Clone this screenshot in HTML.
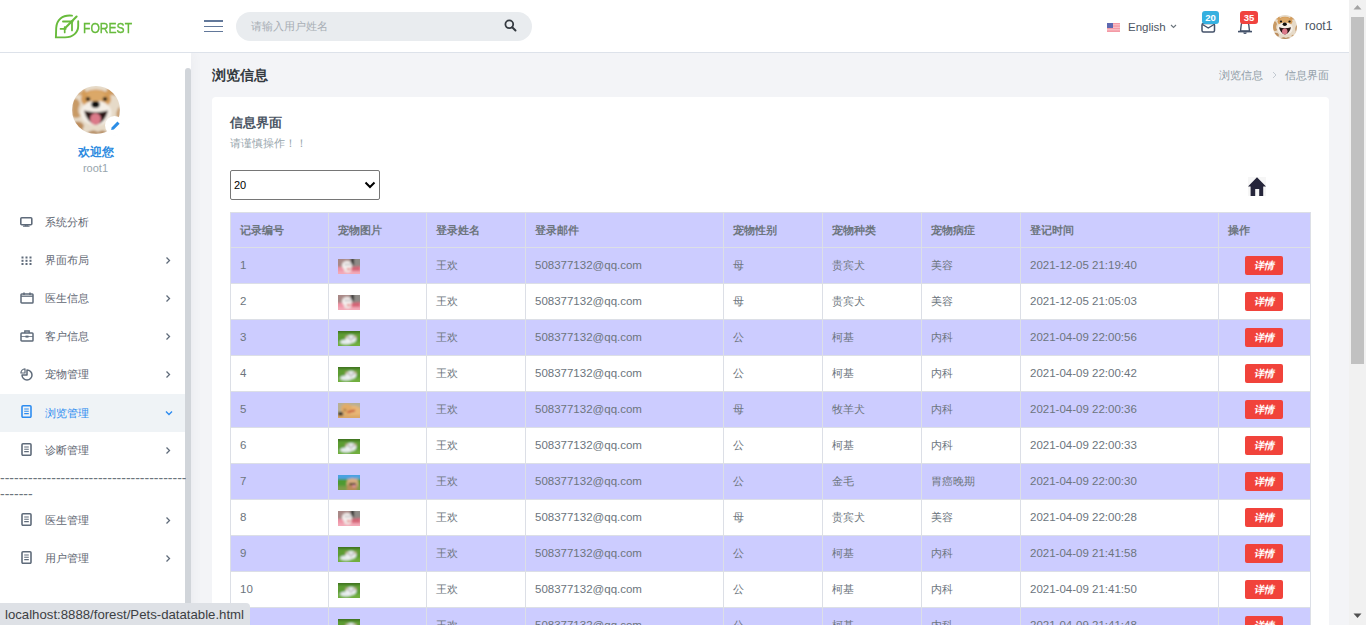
<!DOCTYPE html>
<html><head><meta charset="utf-8">
<style>
*{box-sizing:border-box;margin:0;padding:0}
html,body{width:1366px;height:625px;overflow:hidden}
body{position:relative;background:#f3f4f7;font-family:"Liberation Sans",sans-serif;color:#6c757d}
.abs{position:absolute}
#header{position:absolute;z-index:5;left:0;top:0;width:1349px;height:53px;background:#fff;border-bottom:1px solid #dde2ea}
#sidebar{position:absolute;left:0;top:53px;width:191px;height:572px;background:#fff;box-shadow:0 0 12px rgba(60,70,90,0.06)}
#sbthumb{position:absolute;left:185px;top:68px;width:6px;height:600px;background:#d1d5da;border-radius:3px 3px 0 0}
#vscroll{position:absolute;left:1349px;top:0;width:17px;height:625px;background:#f1f1f1}
#vthumb{position:absolute;left:1351px;top:17px;width:13px;height:347px;background:#c1c1c1}
.card{position:absolute;left:212px;top:97px;width:1117px;height:540px;background:#fff;border-radius:4px}
.trow{position:absolute;left:230px;width:1081px}
.odd{background:#ccccff}.even{background:#fff}
.hl{position:absolute;left:230px;width:1081px;height:1px;background:#dcdfe6}
.vl{position:absolute;top:212px;width:1px;height:420px;background:#dcdfe6}
.th{position:absolute;height:34px;line-height:35px;font-size:11px;font-weight:bold;color:#6c757d;white-space:nowrap}
.td{position:absolute;height:35px;line-height:35px;font-size:11.5px;color:#6c757d;white-space:nowrap}
.cj{font-size:10.5px}
.petwrap{position:absolute;width:22px;height:15px}
.pet{display:block}
.btn{position:absolute;width:38px;height:19px;line-height:19px;background:#f1433b;color:#fff;border-radius:2px;text-align:center;font-size:10px;font-weight:bold;font-style:italic}
.menu{position:absolute;left:0;width:185px;height:38px}
.menu .t{position:absolute;left:45px;top:0;line-height:38px;font-size:11px;color:#5f6773}
.menu svg.ic{position:absolute;left:20px;top:12px}
.menu .chev{position:absolute;left:165px;top:15px}
.menu.active{background:#eff3f6}
.menu.active .t{color:#2d8cf0}
</style></head><body>
<div id="header">
  <svg class="abs" style="left:50px;top:10px" width="35" height="32" viewBox="0 0 35 32">
    <g fill="none" stroke="#68bb3c" stroke-linecap="round">
    <path d="M22 5.6 C 12 4.6, 6.6 10, 6.2 18 L 5.9 27.4 L 15 27.4 C 23 27.4, 28.2 22.5, 28.2 16 L 28.2 11.2" stroke-width="1.9"/>
    <path d="M26.6 6.6 L 14.5 18.7" stroke-width="2.1"/>
    <path d="M13 11.5 L 22.5 11.5" stroke-width="1.9"/>
    <path d="M22 11.5 L 22 20.4" stroke-width="1.8"/>
    <path d="M10.4 18.9 L 15.8 18.9" stroke-width="1.6"/>
    <path d="M14.7 17 L 14.7 22.4" stroke-width="1.7"/>
    </g>
  </svg>
  <div class="abs" style="left:83px;top:17.5px;font-size:15.3px;color:#67bb3d;-webkit-text-stroke:0.4px #67bb3d;line-height:20px;transform:scaleX(0.79);transform-origin:0 0">FOREST</div>
  <div class="abs" style="left:204px;top:20px;width:19px;height:2px;background:#62789a"></div>
  <div class="abs" style="left:204px;top:26px;width:19px;height:1.4px;background:#62789a"></div>
  <div class="abs" style="left:204px;top:31px;width:19px;height:1.4px;background:#62789a"></div>
  <div class="abs" style="left:236px;top:12px;width:296px;height:29px;background:#e9ecef;border-radius:15px"></div>
  <div class="abs" style="left:251px;top:12px;line-height:29px;font-size:10.7px;color:#a8aeb5">请输入用户姓名</div>
  <svg class="abs" style="left:504px;top:19px" width="13" height="13" viewBox="0 0 13 13"><circle cx="5.3" cy="5.3" r="3.9" fill="none" stroke="#343a40" stroke-width="1.8"/><path d="M8.2 8.2 L11.5 11.5" stroke="#343a40" stroke-width="2" stroke-linecap="round"/></svg>
  <!-- flag -->
  <svg class="abs" style="left:1107px;top:23px" width="13" height="9" viewBox="0 0 13 9">
    <rect width="13" height="9" fill="#f49aa5"/>
    <rect y="1.3" width="13" height="1" fill="#fbc9cf"/><rect y="3.8" width="13" height="1" fill="#fbc9cf"/><rect y="6.3" width="13" height="1" fill="#fbc9cf"/>
    <rect width="6" height="5" fill="#5d68b0"/>
  </svg>
  <div class="abs" style="left:1128px;top:18px;font-size:11.5px;line-height:18px;color:#4c5563">English</div>
  <svg class="abs" style="left:1170px;top:24px" width="7" height="5" viewBox="0 0 7 5"><path d="M1 1 L3.5 3.5 L6 1" fill="none" stroke="#6c757d" stroke-width="1.1"/></svg>
  <!-- mail -->
  <svg class="abs" style="left:1201px;top:22px" width="15" height="11" viewBox="0 0 15 11"><rect x="1" y="1.5" width="12.5" height="8.5" rx="1.5" fill="none" stroke="#44526a" stroke-width="1.5"/><path d="M1.5 2.5 L7.25 6 L13 2.5" fill="none" stroke="#44526a" stroke-width="1.4"/></svg>
  <div class="abs" style="left:1202px;top:11px;width:17px;height:13px;background:#35b0e0;border-radius:3px;color:#fff;font-size:9.5px;font-weight:bold;text-align:center;line-height:13px">20</div>
  <!-- bell -->
  <svg class="abs" style="left:1237px;top:20px" width="16" height="15" viewBox="0 0 16 15"><path d="M3.5 11 L4.2 5 C4.5 2.5 6 1.5 8 1.5 C10 1.5 11.5 2.5 11.8 5 L12.5 11 Z" fill="#fff" stroke="#44526a" stroke-width="1.4"/><path d="M1 11.6 L15 11.6" stroke="#44526a" stroke-width="1.6"/><path d="M6.7 12.5 A1.4 1.4 0 0 0 9.3 12.5" fill="none" stroke="#44526a" stroke-width="1.3"/></svg>
  <div class="abs" style="left:1240px;top:11px;width:18px;height:13px;background:#f0433f;border-radius:3px;color:#fff;font-size:9.5px;font-weight:bold;text-align:center;line-height:13px">35</div>
  <!-- avatar -->
  <svg class="abs" style="left:1273px;top:15px" width="24" height="24" viewBox="0 0 48 48" id="dogsmall"><use href="#dog"/></svg>
  <div class="abs" style="left:1305px;top:17px;font-size:12px;line-height:18px;color:#4c5563">root1</div>
</div>
<svg width="0" height="0" style="position:absolute">
  <defs>
    
    <filter id="bl" filterUnits="userSpaceOnUse" x="-3" y="-3" width="28" height="21"><feGaussianBlur stdDeviation="1"/></filter>
    <clipPath id="pc"><rect width="22" height="15"/></clipPath>
    <g id="pet-pink"><g clip-path="url(#pc)"><g filter="url(#bl)">
      <rect x="-2" y="-2" width="26" height="19" fill="#ef93a5"/>
      <rect x="-2" y="-2" width="26" height="10" fill="#a88886"/>
      <rect x="12" y="-2" width="12" height="10" fill="#8e8a86"/>
      <rect x="13" y="-1" width="3" height="7" fill="#2a2626"/>
      <path d="M13 8 L22 7 L22 13 L14 12 Z" fill="#d66577"/>
      <rect x="-2" y="12" width="26" height="5" fill="#f3a9b7"/>
      <ellipse cx="9" cy="6.5" rx="5" ry="4.5" fill="#f6f2f0"/>
      <ellipse cx="9.5" cy="11" rx="3.5" ry="2.5" fill="#f1e8e6"/>
      <circle cx="8" cy="5.5" r="0.8" fill="#556"/><circle cx="11" cy="5.5" r="0.8" fill="#556"/>
      <rect x="9" y="9.5" width="3" height="1.2" fill="#d33"/>
    </g></g></g>
    <g id="pet-green"><g clip-path="url(#pc)"><g filter="url(#bl)">
      <rect x="-2" y="-2" width="26" height="19" fill="#5c9c32"/>
      <rect x="-2" y="-2" width="26" height="4" fill="#3f7324"/>
      <rect x="-2" y="11" width="26" height="6" fill="#6fae3e"/>
      <ellipse cx="8" cy="11" rx="6" ry="2.5" fill="#e6ecef"/>
      <ellipse cx="13" cy="8" rx="5.5" ry="4" fill="#eef2f4"/>
      <circle cx="8.5" cy="5.8" r="1.2" fill="#c9a48a"/><circle cx="17.5" cy="5.8" r="1.2" fill="#c9a48a"/>
      <circle cx="11" cy="7" r="0.8" fill="#445"/><circle cx="15" cy="7" r="0.8" fill="#445"/>
      <circle cx="13" cy="9" r="0.8" fill="#765"/>
    </g></g></g>
    <g id="pet-tan"><g clip-path="url(#pc)"><g filter="url(#bl)">
      <rect x="-2" y="-2" width="26" height="19" fill="#b8b094"/>
      <ellipse cx="15" cy="9" rx="9" ry="6.5" fill="#e8b676"/>
      <ellipse cx="8.5" cy="6" rx="5.5" ry="5.5" fill="#e2ac68"/>
      <rect x="-2" y="12" width="26" height="5" fill="#dba766"/>
      <rect x="0" y="9" width="5" height="3.5" fill="#2a2c28"/>
      <circle cx="6.8" cy="7" r="1" fill="#6a4a2a"/>
      <path d="M9 8.5 L17 6.5 L17 8.2 L10 10 Z" fill="#c0392b"/>
    </g></g></g>
    <g id="pet-sky"><g clip-path="url(#pc)"><g filter="url(#bl)">
      <rect x="-2" y="-2" width="26" height="19" fill="#4e9a30"/>
      <rect x="-2" y="-2" width="26" height="6" fill="#4aa2e2"/>
      <rect x="-2" y="11" width="26" height="6" fill="#7b9c4a"/>
      <ellipse cx="14.5" cy="9" rx="6" ry="6" fill="#d8ae80"/>
      <rect x="9" y="10" width="10" height="6" fill="#b98a5a"/>
      <path d="M10 3 L12 6 L9 6 Z M19 2 L17 6 L20 6 Z" fill="#d8ae80"/>
      <rect x="11" y="8" width="7" height="2" fill="#222"/>
      <ellipse cx="16" cy="11" rx="1.5" ry="1.2" fill="#f19ab0"/>
    </g></g></g>
<clipPath id="cc"><circle cx="24" cy="24" r="24"/></clipPath>
    <filter id="dbl" filterUnits="userSpaceOnUse" x="-4" y="-4" width="56" height="56"><feGaussianBlur stdDeviation="0.9"/></filter>
    <g id="dog">
      <g clip-path="url(#cc)"><g filter="url(#dbl)">
        <rect x="-4" y="-4" width="56" height="56" fill="#e6dac8"/>
        <path d="M0 14 Q6 10 8 18 Q4 26 9 30 Q3 34 0 30 Z" fill="#c0894c" opacity="0.8"/>
        <path d="M2 36 Q10 34 12 40 Q8 46 14 48 L0 48 Z" fill="#b07840" opacity="0.8"/>
        <path d="M34 0 Q44 2 48 8 Q42 12 38 6 Z" fill="#b98248" opacity="0.8"/>
        <path d="M48 20 Q42 26 46 34 Q40 40 48 42 Z" fill="#b88046" opacity="0.7"/>
        <path d="M14 48 Q20 42 26 46 Q32 42 36 48 Z" fill="#a5703a" opacity="0.8"/>
        <ellipse cx="40" cy="42" rx="3" ry="2.5" fill="#c2925c" opacity="0.8"/>
        <ellipse cx="4" cy="6" rx="4" ry="3" fill="#c89560" opacity="0.7"/>
        <path d="M7 9 L12 2 L16 10 Z" fill="#d29c5c"/>
        <path d="M41 9 L36 2 L32 10 Z" fill="#d29c5c"/>
        <ellipse cx="24" cy="13" rx="15" ry="9.5" fill="#d59c58"/>
        <ellipse cx="24" cy="27" rx="15.5" ry="12.5" fill="#f4eee6"/>
        <ellipse cx="24" cy="10" rx="9" ry="5.5" fill="#dba868"/>
        <ellipse cx="16" cy="13" rx="2.3" ry="1.9" fill="#141414"/>
        <ellipse cx="33" cy="13" rx="2.3" ry="1.9" fill="#141414"/>
        <ellipse cx="23.5" cy="18.5" rx="4.2" ry="3.4" fill="#0e0e0e"/>
        <path d="M12 24.5 Q24 28 36 24.5 Q33 37 24 39 Q15 37 12 24.5 Z" fill="#2a1616"/>
        <ellipse cx="23.5" cy="33" rx="5.5" ry="6" fill="#dc7a8a"/>
      </g></g>
    </g>
  </defs>
</svg>
<div id="sidebar"></div>
<div id="sbthumb"></div>
<!-- profile -->
<svg class="abs" style="left:72px;top:86px" width="48" height="48" viewBox="0 0 48 48"><use href="#dog"/></svg>
<div class="abs" style="left:105px;top:116px;width:19px;height:19px;border-radius:50%;background:#fff;box-shadow:0 6px 28px rgba(0,0,0,0.018)"></div>
<svg class="abs" style="left:109px;top:120px" width="12" height="12" viewBox="0 0 12 12"><path d="M2.2 10 L2.6 7.4 L8.4 1.6 L10.6 3.8 L4.8 9.6 Z" fill="#2b8de6"/></svg>
<div class="abs" style="left:0;top:143px;width:191px;text-align:center;font-size:11.5px;font-weight:bold;color:#2b8ae0;line-height:18px">欢迎您</div>
<div class="abs" style="left:0;top:160px;width:191px;text-align:center;font-size:11px;color:#98a6ad;line-height:16px">root1</div>
<!-- menu -->
<div class="menu" style="top:203px">
  <svg class="ic" width="14" height="12" viewBox="0 0 14 12" style="top:14px"><rect x="0.8" y="0.8" width="11" height="6.9" rx="1" fill="none" stroke="#5f6b7a" stroke-width="1.6"/><path d="M5.5 7.5 V9.2 M7.1 7.5 V9.2" stroke="#5f6b7a" stroke-width="1.2"/><path d="M3.6 9.2 H9" stroke="#5f6b7a" stroke-width="1.3" stroke-linecap="round"/></svg>
  <div class="t">系统分析</div>
</div>
<div class="menu" style="top:241px">
  <svg class="ic" width="12" height="10" viewBox="0 0 12 10" style="left:21px;top:15px"><g fill="#5f6b7a"><rect x="0.5" y="0.5" width="2" height="2"/><rect x="4.5" y="0.5" width="2" height="2"/><rect x="8.5" y="0.5" width="2" height="2"/><rect x="0.5" y="3.8" width="2" height="2"/><rect x="4.5" y="3.8" width="2" height="2"/><rect x="8.5" y="3.8" width="2" height="2"/><rect x="0.5" y="7" width="2" height="2"/><rect x="4.5" y="7" width="2" height="2"/><rect x="8.5" y="7" width="2" height="2"/></g></svg>
  <div class="t">界面布局</div>
  <svg class="chev" width="6" height="9" viewBox="0 0 6 9"><path d="M1.5 1.5 L4.5 4.5 L1.5 7.5" fill="none" stroke="#5f6b7a" stroke-width="1.3"/></svg>
</div>
<div class="menu" style="top:279px">
  <svg class="ic" width="14" height="12" viewBox="0 0 14 12" style="top:13px"><rect x="1" y="2" width="12" height="9" rx="0.8" fill="none" stroke="#5f6b7a" stroke-width="1.5"/><path d="M1 4.2 H13" stroke="#5f6b7a" stroke-width="1.3"/><path d="M4 0.5 V3 M10 0.5 V3" stroke="#5f6b7a" stroke-width="1.5"/></svg>
  <div class="t">医生信息</div>
  <svg class="chev" width="6" height="9" viewBox="0 0 6 9"><path d="M1.5 1.5 L4.5 4.5 L1.5 7.5" fill="none" stroke="#5f6b7a" stroke-width="1.3"/></svg>
</div>
<div class="menu" style="top:317px">
  <svg class="ic" width="14" height="12" viewBox="0 0 14 12" style="top:13px"><rect x="1" y="3" width="12" height="8" rx="0.8" fill="none" stroke="#5f6b7a" stroke-width="1.5"/><path d="M4.8 3 V1 H9.2 V3" fill="none" stroke="#5f6b7a" stroke-width="1.3"/><path d="M1 6.5 H13" stroke="#5f6b7a" stroke-width="0.8"/><rect x="5.5" y="5.6" width="3" height="2" fill="#5f6b7a"/></svg>
  <div class="t">客户信息</div>
  <svg class="chev" width="6" height="9" viewBox="0 0 6 9"><path d="M1.5 1.5 L4.5 4.5 L1.5 7.5" fill="none" stroke="#5f6b7a" stroke-width="1.3"/></svg>
</div>
<div class="menu" style="top:355px">
  <svg class="ic" width="14" height="13" viewBox="0 0 14 13" style="top:13px"><path d="M7 2 A5 5 0 1 1 2 7 H7 Z" fill="none" stroke="#5f6b7a" stroke-width="1.5" stroke-linejoin="round"/><path d="M5 0.9 V5 H0.9 A4.2 4.2 0 0 1 5 0.9 Z" fill="none" stroke="#5f6b7a" stroke-width="1.2" stroke-linejoin="round"/></svg>
  <div class="t">宠物管理</div>
  <svg class="chev" width="6" height="9" viewBox="0 0 6 9"><path d="M1.5 1.5 L4.5 4.5 L1.5 7.5" fill="none" stroke="#5f6b7a" stroke-width="1.3"/></svg>
</div>
<div class="menu active" style="top:394px">
  <svg class="ic" width="11" height="13" viewBox="0 0 11 13" style="left:21px;top:11px"><rect x="1" y="0.8" width="9" height="11.5" rx="1" fill="none" stroke="#2d8cf0" stroke-width="1.6"/><path d="M3.2 4 H7.8 M3.2 6.3 H7.8 M3.2 8.6 H7.8" stroke="#2d8cf0" stroke-width="1.1"/></svg>
  <div class="t">浏览管理</div>
  <svg class="chev" width="8" height="6" viewBox="0 0 8 6" style="left:165px;top:16px"><path d="M1 1.5 L4 4.5 L7 1.5" fill="none" stroke="#2d8cf0" stroke-width="1.4"/></svg>
</div>
<div class="menu" style="top:431px">
  <svg class="ic" width="11" height="13" viewBox="0 0 11 13" style="left:21px;top:12px"><rect x="1" y="0.8" width="9" height="11.5" rx="1" fill="none" stroke="#5f6b7a" stroke-width="1.6"/><path d="M3.2 4 H7.8 M3.2 6.3 H7.8 M3.2 8.6 H7.8" stroke="#5f6b7a" stroke-width="1.1"/></svg>
  <div class="t">诊断管理</div>
  <svg class="chev" width="6" height="9" viewBox="0 0 6 9"><path d="M1.5 1.5 L4.5 4.5 L1.5 7.5" fill="none" stroke="#5f6b7a" stroke-width="1.3"/></svg>
</div>
<div class="abs" style="left:0;top:470px;width:186px;overflow:hidden;white-space:nowrap;font-size:14px;line-height:16px;color:#6c757d">-----------------------------------------------</div>
<div class="abs" style="left:0;top:486px;width:186px;overflow:hidden;white-space:nowrap;font-size:14px;line-height:16px;color:#6c757d">-------</div>
<div class="menu" style="top:501px">
  <svg class="ic" width="11" height="13" viewBox="0 0 11 13" style="left:21px;top:12px"><rect x="1" y="0.8" width="9" height="11.5" rx="1" fill="none" stroke="#5f6b7a" stroke-width="1.6"/><path d="M3.2 4 H7.8 M3.2 6.3 H7.8 M3.2 8.6 H7.8" stroke="#5f6b7a" stroke-width="1.1"/></svg>
  <div class="t">医生管理</div>
  <svg class="chev" width="6" height="9" viewBox="0 0 6 9"><path d="M1.5 1.5 L4.5 4.5 L1.5 7.5" fill="none" stroke="#5f6b7a" stroke-width="1.3"/></svg>
</div>
<div class="menu" style="top:539px">
  <svg class="ic" width="11" height="13" viewBox="0 0 11 13" style="left:21px;top:12px"><rect x="1" y="0.8" width="9" height="11.5" rx="1" fill="none" stroke="#5f6b7a" stroke-width="1.6"/><path d="M3.2 4 H7.8 M3.2 6.3 H7.8 M3.2 8.6 H7.8" stroke="#5f6b7a" stroke-width="1.1"/></svg>
  <div class="t">用户管理</div>
  <svg class="chev" width="6" height="9" viewBox="0 0 6 9"><path d="M1.5 1.5 L4.5 4.5 L1.5 7.5" fill="none" stroke="#5f6b7a" stroke-width="1.3"/></svg>
</div>
<div class="abs" style="left:212px;top:65px;font-size:14px;font-weight:bold;color:#343a40;line-height:20px">浏览信息</div>
<div class="abs" style="left:1219px;top:66px;font-size:11px;color:#8f9ca6;line-height:18px">浏览信息</div>
<svg class="abs" style="left:1272px;top:71px" width="5" height="8" viewBox="0 0 5 8"><path d="M1 1 L4 4 L1 7" fill="none" stroke="#c3cad2" stroke-width="1"/></svg>
<div class="abs" style="left:1285px;top:66px;font-size:11px;color:#8f9ca6;line-height:18px">信息界面</div>
<div class="card"></div>
<div class="abs" style="left:230px;top:113px;font-size:13px;font-weight:bold;color:#4a5563;line-height:20px">信息界面</div>
<div class="abs" style="left:230px;top:134px;font-size:10.5px;color:#98a6ad;line-height:18px">请谨慎操作！！</div>
<div class="abs" style="left:230px;top:170px;width:150px;height:30px;border:1px solid #767676;border-radius:2px;background:#fff"></div>
<div class="abs" style="left:234px;top:176px;font-size:11px;color:#000;line-height:18px">20</div>
<svg class="abs" style="left:364px;top:181px" width="12" height="8" viewBox="0 0 12 8"><path d="M1.5 1.5 L6 6 L10.5 1.5" fill="none" stroke="#000" stroke-width="2"/></svg>
<div class="abs" style="left:1248px;top:177px;width:18px;height:19px;background:#f6f6f6"></div>
<svg class="abs" style="left:1248px;top:177px" width="18" height="19" viewBox="0 0 18 19"><path d="M9 0.2 L18 9.6 L15.2 9.6 L15.2 19 L11.2 19 L11.2 12 L7.2 12 L7.2 19 L2.6 19 L2.6 9.6 L0 9.6 Z" fill="#25253a"/></svg>
<div class="trow odd" style="top:212px;height:36px"></div>
<div class="trow odd" style="top:247px;height:37px"></div>
<div class="trow even" style="top:283px;height:37px"></div>
<div class="trow odd" style="top:319px;height:37px"></div>
<div class="trow even" style="top:355px;height:37px"></div>
<div class="trow odd" style="top:391px;height:37px"></div>
<div class="trow even" style="top:427px;height:37px"></div>
<div class="trow odd" style="top:463px;height:37px"></div>
<div class="trow even" style="top:499px;height:37px"></div>
<div class="trow odd" style="top:535px;height:37px"></div>
<div class="trow even" style="top:571px;height:37px"></div>
<div class="trow odd" style="top:607px;height:37px"></div>
<div class="hl" style="top:212px"></div>
<div class="hl" style="top:247px"></div>
<div class="hl" style="top:283px"></div>
<div class="hl" style="top:319px"></div>
<div class="hl" style="top:355px"></div>
<div class="hl" style="top:391px"></div>
<div class="hl" style="top:427px"></div>
<div class="hl" style="top:463px"></div>
<div class="hl" style="top:499px"></div>
<div class="hl" style="top:535px"></div>
<div class="hl" style="top:571px"></div>
<div class="hl" style="top:607px"></div>
<div class="hl" style="top:643px"></div>
<div class="vl" style="left:230px"></div>
<div class="vl" style="left:328px"></div>
<div class="vl" style="left:426px"></div>
<div class="vl" style="left:525px"></div>
<div class="vl" style="left:723px"></div>
<div class="vl" style="left:822px"></div>
<div class="vl" style="left:921px"></div>
<div class="vl" style="left:1020px"></div>
<div class="vl" style="left:1218px"></div>
<div class="vl" style="left:1310px"></div>
<div class="th" style="left:240px;top:213px">记录编号</div>
<div class="th" style="left:338px;top:213px">宠物图片</div>
<div class="th" style="left:436px;top:213px">登录姓名</div>
<div class="th" style="left:535px;top:213px">登录邮件</div>
<div class="th" style="left:733px;top:213px">宠物性别</div>
<div class="th" style="left:832px;top:213px">宠物种类</div>
<div class="th" style="left:931px;top:213px">宠物病症</div>
<div class="th" style="left:1030px;top:213px">登记时间</div>
<div class="th" style="left:1228px;top:213px">操作</div>
<div class="td" style="left:240px;top:248px">1</div>
<div class="td cj" style="left:436px;top:248px">王欢</div>
<div class="td" style="left:535px;top:248px">508377132@qq.com</div>
<div class="td cj" style="left:733px;top:248px">母</div>
<div class="td cj" style="left:832px;top:248px">贵宾犬</div>
<div class="td cj" style="left:931px;top:248px">美容</div>
<div class="td" style="left:1030px;top:248px">2021-12-05 21:19:40</div>
<div class="petwrap" style="left:338px;top:259px"><svg class="pet" width="22" height="15" viewBox="0 0 22 15"><use href="#pet-pink"/></svg></div>
<div class="btn" style="left:1245px;top:256px">详情</div>
<div class="td" style="left:240px;top:284px">2</div>
<div class="td cj" style="left:436px;top:284px">王欢</div>
<div class="td" style="left:535px;top:284px">508377132@qq.com</div>
<div class="td cj" style="left:733px;top:284px">母</div>
<div class="td cj" style="left:832px;top:284px">贵宾犬</div>
<div class="td cj" style="left:931px;top:284px">美容</div>
<div class="td" style="left:1030px;top:284px">2021-12-05 21:05:03</div>
<div class="petwrap" style="left:338px;top:295px"><svg class="pet" width="22" height="15" viewBox="0 0 22 15"><use href="#pet-pink"/></svg></div>
<div class="btn" style="left:1245px;top:292px">详情</div>
<div class="td" style="left:240px;top:320px">3</div>
<div class="td cj" style="left:436px;top:320px">王欢</div>
<div class="td" style="left:535px;top:320px">508377132@qq.com</div>
<div class="td cj" style="left:733px;top:320px">公</div>
<div class="td cj" style="left:832px;top:320px">柯基</div>
<div class="td cj" style="left:931px;top:320px">内科</div>
<div class="td" style="left:1030px;top:320px">2021-04-09 22:00:56</div>
<div class="petwrap" style="left:338px;top:331px"><svg class="pet" width="22" height="15" viewBox="0 0 22 15"><use href="#pet-green"/></svg></div>
<div class="btn" style="left:1245px;top:328px">详情</div>
<div class="td" style="left:240px;top:356px">4</div>
<div class="td cj" style="left:436px;top:356px">王欢</div>
<div class="td" style="left:535px;top:356px">508377132@qq.com</div>
<div class="td cj" style="left:733px;top:356px">公</div>
<div class="td cj" style="left:832px;top:356px">柯基</div>
<div class="td cj" style="left:931px;top:356px">内科</div>
<div class="td" style="left:1030px;top:356px">2021-04-09 22:00:42</div>
<div class="petwrap" style="left:338px;top:367px"><svg class="pet" width="22" height="15" viewBox="0 0 22 15"><use href="#pet-green"/></svg></div>
<div class="btn" style="left:1245px;top:364px">详情</div>
<div class="td" style="left:240px;top:392px">5</div>
<div class="td cj" style="left:436px;top:392px">王欢</div>
<div class="td" style="left:535px;top:392px">508377132@qq.com</div>
<div class="td cj" style="left:733px;top:392px">母</div>
<div class="td cj" style="left:832px;top:392px">牧羊犬</div>
<div class="td cj" style="left:931px;top:392px">内科</div>
<div class="td" style="left:1030px;top:392px">2021-04-09 22:00:36</div>
<div class="petwrap" style="left:338px;top:403px"><svg class="pet" width="22" height="15" viewBox="0 0 22 15"><use href="#pet-tan"/></svg></div>
<div class="btn" style="left:1245px;top:400px">详情</div>
<div class="td" style="left:240px;top:428px">6</div>
<div class="td cj" style="left:436px;top:428px">王欢</div>
<div class="td" style="left:535px;top:428px">508377132@qq.com</div>
<div class="td cj" style="left:733px;top:428px">公</div>
<div class="td cj" style="left:832px;top:428px">柯基</div>
<div class="td cj" style="left:931px;top:428px">内科</div>
<div class="td" style="left:1030px;top:428px">2021-04-09 22:00:33</div>
<div class="petwrap" style="left:338px;top:439px"><svg class="pet" width="22" height="15" viewBox="0 0 22 15"><use href="#pet-green"/></svg></div>
<div class="btn" style="left:1245px;top:436px">详情</div>
<div class="td" style="left:240px;top:464px">7</div>
<div class="td cj" style="left:436px;top:464px">王欢</div>
<div class="td" style="left:535px;top:464px">508377132@qq.com</div>
<div class="td cj" style="left:733px;top:464px">公</div>
<div class="td cj" style="left:832px;top:464px">金毛</div>
<div class="td cj" style="left:931px;top:464px">胃癌晚期</div>
<div class="td" style="left:1030px;top:464px">2021-04-09 22:00:30</div>
<div class="petwrap" style="left:338px;top:475px"><svg class="pet" width="22" height="15" viewBox="0 0 22 15"><use href="#pet-sky"/></svg></div>
<div class="btn" style="left:1245px;top:472px">详情</div>
<div class="td" style="left:240px;top:500px">8</div>
<div class="td cj" style="left:436px;top:500px">王欢</div>
<div class="td" style="left:535px;top:500px">508377132@qq.com</div>
<div class="td cj" style="left:733px;top:500px">母</div>
<div class="td cj" style="left:832px;top:500px">贵宾犬</div>
<div class="td cj" style="left:931px;top:500px">美容</div>
<div class="td" style="left:1030px;top:500px">2021-04-09 22:00:28</div>
<div class="petwrap" style="left:338px;top:511px"><svg class="pet" width="22" height="15" viewBox="0 0 22 15"><use href="#pet-pink"/></svg></div>
<div class="btn" style="left:1245px;top:508px">详情</div>
<div class="td" style="left:240px;top:536px">9</div>
<div class="td cj" style="left:436px;top:536px">王欢</div>
<div class="td" style="left:535px;top:536px">508377132@qq.com</div>
<div class="td cj" style="left:733px;top:536px">公</div>
<div class="td cj" style="left:832px;top:536px">柯基</div>
<div class="td cj" style="left:931px;top:536px">内科</div>
<div class="td" style="left:1030px;top:536px">2021-04-09 21:41:58</div>
<div class="petwrap" style="left:338px;top:547px"><svg class="pet" width="22" height="15" viewBox="0 0 22 15"><use href="#pet-green"/></svg></div>
<div class="btn" style="left:1245px;top:544px">详情</div>
<div class="td" style="left:240px;top:572px">10</div>
<div class="td cj" style="left:436px;top:572px">王欢</div>
<div class="td" style="left:535px;top:572px">508377132@qq.com</div>
<div class="td cj" style="left:733px;top:572px">公</div>
<div class="td cj" style="left:832px;top:572px">柯基</div>
<div class="td cj" style="left:931px;top:572px">内科</div>
<div class="td" style="left:1030px;top:572px">2021-04-09 21:41:50</div>
<div class="petwrap" style="left:338px;top:583px"><svg class="pet" width="22" height="15" viewBox="0 0 22 15"><use href="#pet-green"/></svg></div>
<div class="btn" style="left:1245px;top:580px">详情</div>
<div class="td" style="left:240px;top:608px">11</div>
<div class="td cj" style="left:436px;top:608px">王欢</div>
<div class="td" style="left:535px;top:608px">508377132@qq.com</div>
<div class="td cj" style="left:733px;top:608px">公</div>
<div class="td cj" style="left:832px;top:608px">柯基</div>
<div class="td cj" style="left:931px;top:608px">内科</div>
<div class="td" style="left:1030px;top:608px">2021-04-09 21:41:48</div>
<div class="petwrap" style="left:338px;top:619px"><svg class="pet" width="22" height="15" viewBox="0 0 22 15"><use href="#pet-green"/></svg></div>
<div class="btn" style="left:1245px;top:616px">详情</div><div id="vscroll"></div>
<div id="vthumb"></div>
<svg class="abs" style="left:1352px;top:3px" width="11" height="8" viewBox="0 0 11 8"><path d="M1.5 6.5 L5.5 2 L9.5 6.5 Z" fill="#a3a3a3"/></svg>
<svg class="abs" style="left:1352px;top:612px" width="11" height="8" viewBox="0 0 11 8"><path d="M1.5 1.5 L5.5 6 L9.5 1.5 Z" fill="#505050"/></svg>
<div class="abs" style="left:0;top:603px;width:250px;height:22px;background:#dee1e6;border-top-right-radius:4px;font-size:13.2px;line-height:23px;color:#3c4043;padding-left:5px;white-space:nowrap">localhost:8888/forest/Pets-datatable.html</div>
</body></html>
